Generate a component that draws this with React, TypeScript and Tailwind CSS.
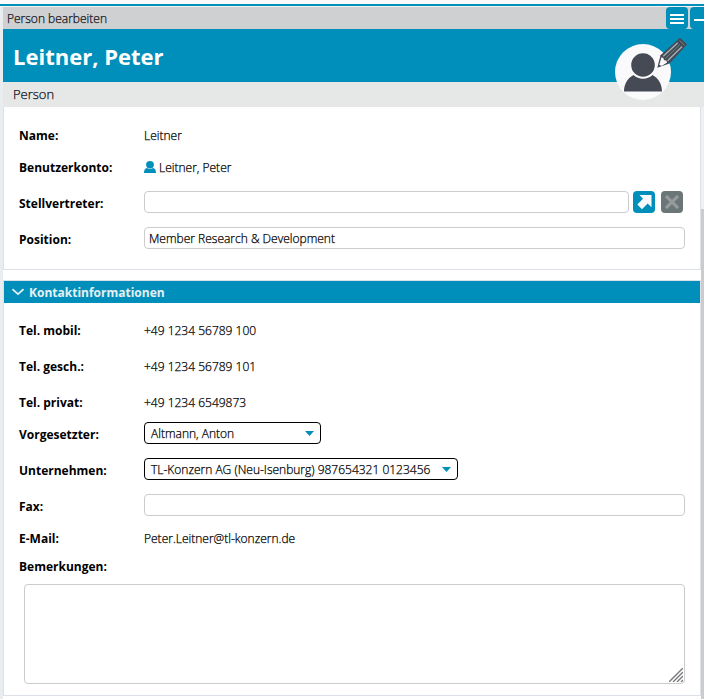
import type { ReactNode } from 'react';

function Row({ label, className, labelClass = '', children }: { label: string; className: string; labelClass?: string; children?: ReactNode }) {
  return (
    <div className={`flex items-center ${className}`}>
      <div className={`w-[125px] shrink-0 font-bold leading-4 [-webkit-text-stroke:0px] ${labelClass}`}>{label}</div>
      {children}
    </div>
  );
}

function Field({ className, value = '' }: { className: string; value?: string }) {
  return <div className={`h-[22px] rounded border border-[#cccccc] bg-white px-1 leading-[21px] ${className}`}>{value}</div>;
}

function Select({ className, value }: { className: string; value: string }) {
  return (
    <div className={`flex h-[22px] items-center justify-between rounded border border-black px-1.5 leading-5 ${className}`}>
      <span className="whitespace-nowrap pt-0.5">{value}</span>
      <svg width="9" height="5" viewBox="0 0 9 5" className="mt-px shrink-0" fill="#008fba">
        <path d="M0 0h9L4.500 5z" />
      </svg>
    </div>
  );
}

function Avatar() {
  return (
    <svg className="absolute left-[612px] top-[34px]" width="80" height="70" viewBox="612 34 80 70">
      <circle cx="643" cy="72" r="28" fill="#fafafc" />
      <circle cx="643" cy="65" r="11.800" fill="#454a54" />
      <path d="M624 91.500c0-7 3-13 9.500-16.500 5.500 5 13.500 5 19 0 6.500 3.500 9.500 9.500 9.500 16.500z" fill="#454a54" />
      <path d="M657.300 67.800l3.200-12.500 19.500-17.500 7 6.800-17.500 19z" fill="#454a54" />
      <path d="M659.300 64.800l2.200-7.500 1.800 0.700 0.800 2.200 2.200 0.300 0.800 1.900-5.500 3.600z" fill="#fafafc" />
      <path d="M663.300 56.300l14.500-13.500M667.600 60.700l14.500-14.200" stroke="#a3b4bd" strokeWidth="1.300" />
      <path d="M665.400 58.500l14.500-14" stroke="#7d8b94" strokeWidth="0.800" />
      <path d="M679.500 40.500l5 4.800" stroke="#7d8b94" strokeWidth="0.800" />
    </svg>
  );
}

export default function App() {
  return (
    <div className="relative flex h-[699px] w-[704px] flex-col overflow-hidden bg-[#fafafa] font-['Open_Sans',sans-serif] text-[12px] font-light text-black [-webkit-text-stroke:0.25px]">
      <div className="mt-1 h-0.5 shrink-0 bg-[#008fba]" />
      <div className="flex min-h-0 grow border-t border-[#f3f3f6] bg-[#e9edf0] pl-[3px]">
        <div className="flex min-w-0 grow flex-col">
          <header className="flex h-[22px] shrink-0 items-center justify-between bg-[#cfd0d2] pl-1 text-[#101018]">
            <span className="pt-0.5 leading-5">Person bearbeiten</span>
            <div className="flex gap-0.5">
              <div className="flex h-[22px] w-[22px] flex-col items-center justify-center gap-0.5 rounded bg-[#008fba] pt-0.5">
                <div className="h-0.5 w-[14px] bg-white" />
                <div className="h-0.5 w-[14px] bg-white" />
                <div className="h-0.5 w-[14px] bg-white" />
              </div>
              <div className="flex h-[22px] w-[14px] items-center justify-end rounded-l bg-[#008fba] pt-1">
                <div className="h-0.5 w-[10px] bg-white" />
              </div>
            </div>
          </header>
          <h1 className="h-[53px] shrink-0 bg-[#008fba] pl-[10px] text-[22px] font-bold leading-[54px] text-white [-webkit-text-stroke:0px]">Leitner, Peter</h1>
          <div className="h-[25px] shrink-0 bg-[#e6e8e8] pl-[10px] text-[13px] leading-[25px] text-[#101018]">Person</div>
          <div className="flex grow">
            <main className="w-[698px] bg-white">
              <section className="h-[163px] border-x border-b border-[#dce1e9] pl-[15px] pt-[13px]">
                <Row label="Name:" className="h-8">Leitner</Row>
                <Row label="Benutzerkonto:" className="h-8">
                  <svg width="12" height="12" viewBox="0 0 12 12" className="mb-0.5 mr-[3px]" fill="#008fba">
                    <ellipse cx="6" cy="3.700" rx="3.900" ry="3.700" />
                    <path d="M0 12c0-3 1-4.400 3-4.900 1.700 1.300 4.300 1.300 6 0 2 0.500 3 1.900 3 4.900z" />
                  </svg>
                  Leitner, Peter
                </Row>
                <Row label="Stellvertreter:" className="h-9" labelClass="pt-[3px]">
                  <Field className="w-[485px]" />
                  <div className="ml-1 flex h-[22px] w-[22px] items-center justify-center rounded bg-[#008fba]">
                    <svg width="16" height="16" viewBox="0 0 16 16" fill="#fafafc"><path d="M3.500 1h12v12.200L11.700 9.600 6 15.200 1.300 10.500 7 4.800z" /></svg>
                  </div>
                  <div className="ml-1.5 flex h-[22px] w-[22px] items-center justify-center rounded bg-[#6a7677]">
                    <svg width="14" height="14" viewBox="0 0 14 14" stroke="#969a9b" strokeWidth="3.200"><path d="M1 1l12 12M13 1L1 13" /></svg>
                  </div>
                </Row>
                <Row label="Position:" className="h-9" labelClass="pt-[3px]">
                  <Field className="w-[541px]" value="Member Research & Development" />
                </Row>
              </section>
              <section className="mt-[10px] h-[416px] border border-[#dce1e9]">
                <h2 className="flex h-[22px] items-center bg-[#008fba] pl-2 font-bold text-[#e6f0f4] [-webkit-text-stroke:0px]">
                  <svg width="12" height="8" viewBox="0 0 12 8" className="mr-[5px]" fill="none" stroke="#e6f0f4" strokeWidth="1.700"><path d="M0.500 1.200L6 6.200 11.500 1.200" /></svg>
                  <span className="pt-0.5">Kontaktinformationen</span>
                </h2>
                <div className="pl-[15px] pt-[10px]">
                  <Row label="Tel. mobil:" className="h-9">+49 1234 56789 100</Row>
                  <Row label="Tel. gesch.:" className="h-9">+49 1234 56789 101</Row>
                  <Row label="Tel. privat:" className="h-[30px] pt-1.5">+49 1234 6549873</Row>
                  <Row label="Vorgesetzter:" className="h-9" labelClass="pt-[3px]"><Select className="w-[177px]" value="Altmann, Anton" /></Row>
                  <Row label="Unternehmen:" className="h-9" labelClass="pt-[3px]"><Select className="w-[314px]" value="TL-Konzern AG (Neu-Isenburg) 987654321 0123456" /></Row>
                  <Row label="Fax:" className="h-9" labelClass="pt-[3px]"><Field className="w-[541px]" /></Row>
                  <Row label="E-Mail:" className="h-8">Peter.Leitner@tl-konzern.de</Row>
                  <Row label="Bemerkungen:" className="h-6" />
                  <div className="ml-[5px] mt-[5px] flex h-[100px] w-[661px] items-end justify-end rounded border border-[#cccccc] p-px">
                    <svg width="14" height="14" viewBox="0 0 14 14" stroke="#77777c" strokeWidth="1.400"><path d="M0 14L14 0M4 14L14 4M8 14l6-6M12 14l2-2" /></svg>
                  </div>
                </div>
              </section>
            </main>
            <div className="flex w-[3px] flex-col bg-[#f0f0f0]">
              <div className="mt-[102px] grow bg-[#cccccc]" />
            </div>
          </div>
        </div>
      </div>
      <Avatar />
    </div>
  );
}
